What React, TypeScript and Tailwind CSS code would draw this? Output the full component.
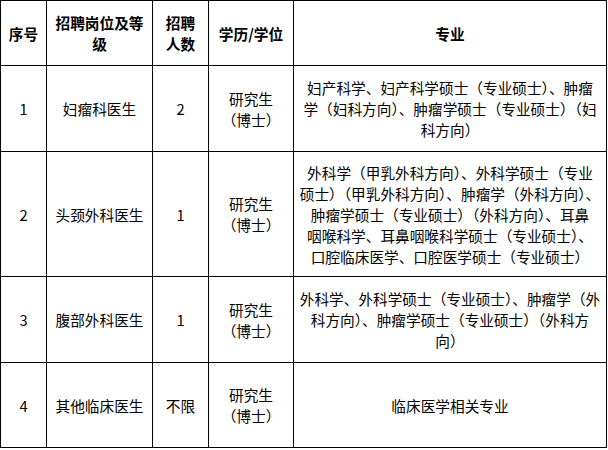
const rows = [
  {
    no: '1',
    post: '妇瘤科医生',
    count: '2',
    major: [
      '妇产科学、妇产科学硕士（专业硕士）、肿瘤',
      '学（妇科方向）、肿瘤学硕士（专业硕士）（妇',
      '科方向）',
    ],
    h: 'h-[86px]',
  },
  {
    no: '2',
    post: '头颈外科医生',
    count: '1',
    major: [
      '外科学（甲乳外科方向）、外科学硕士（专业',
      '硕士）（甲乳外科方向）、肿瘤学（外科方向）、',
      '肿瘤学硕士（专业硕士）（外科方向）、耳鼻',
      '咽喉科学、耳鼻咽喉科学硕士（专业硕士）、',
      '口腔临床医学、口腔医学硕士（专业硕士）',
    ],
    h: 'h-[125px]',
  },
  {
    no: '3',
    post: '腹部外科医生',
    count: '1',
    major: [
      '外科学、外科学硕士（专业硕士）、肿瘤学（外',
      '科方向）、肿瘤学硕士（专业硕士）（外科方',
      '向）',
    ],
    h: 'h-[86px]',
  },
  {
    no: '4',
    post: '其他临床医生',
    count: '不限',
    major: ['临床医学相关专业'],
    h: 'h-[85px]',
  },
];

export default function App() {
  const cell = 'border border-black text-center align-middle p-0';
  return (
    <div className="w-[608px] h-[450px] bg-white text-black font-['Noto_Sans_CJK_SC',sans-serif] text-[14.67px] leading-[21px]">
      <table className="table-fixed border-collapse w-[606px]">
        <colgroup>
          <col className="w-[46px]" />
          <col className="w-[106px]" />
          <col className="w-[56px]" />
          <col className="w-[85px]" />
          <col className="w-[313px]" />
        </colgroup>
        <thead>
          <tr className="h-[65px] font-bold">
            <th className={cell}>序号</th>
            <th className={cell}>
              招聘岗位及等
              <br />
              级
            </th>
            <th className={cell}>
              招聘
              <br />
              人数
            </th>
            <th className={cell}>学历/学位</th>
            <th className={cell}>专业</th>
          </tr>
        </thead>
        <tbody>
          {rows.map((r) => (
            <tr key={r.no} className={r.h}>
              <td className={cell}>{r.no}</td>
              <td className={cell}>{r.post}</td>
              <td className={cell}>{r.count}</td>
              <td className={cell}>
                研究生
                <br />
                （博士）
              </td>
              <td className={cell}>
                {r.major.map((line, i) => (
                  <span key={i} className="block whitespace-nowrap">
                    {line}
                  </span>
                ))}
              </td>
            </tr>
          ))}
        </tbody>
      </table>
    </div>
  );
}
